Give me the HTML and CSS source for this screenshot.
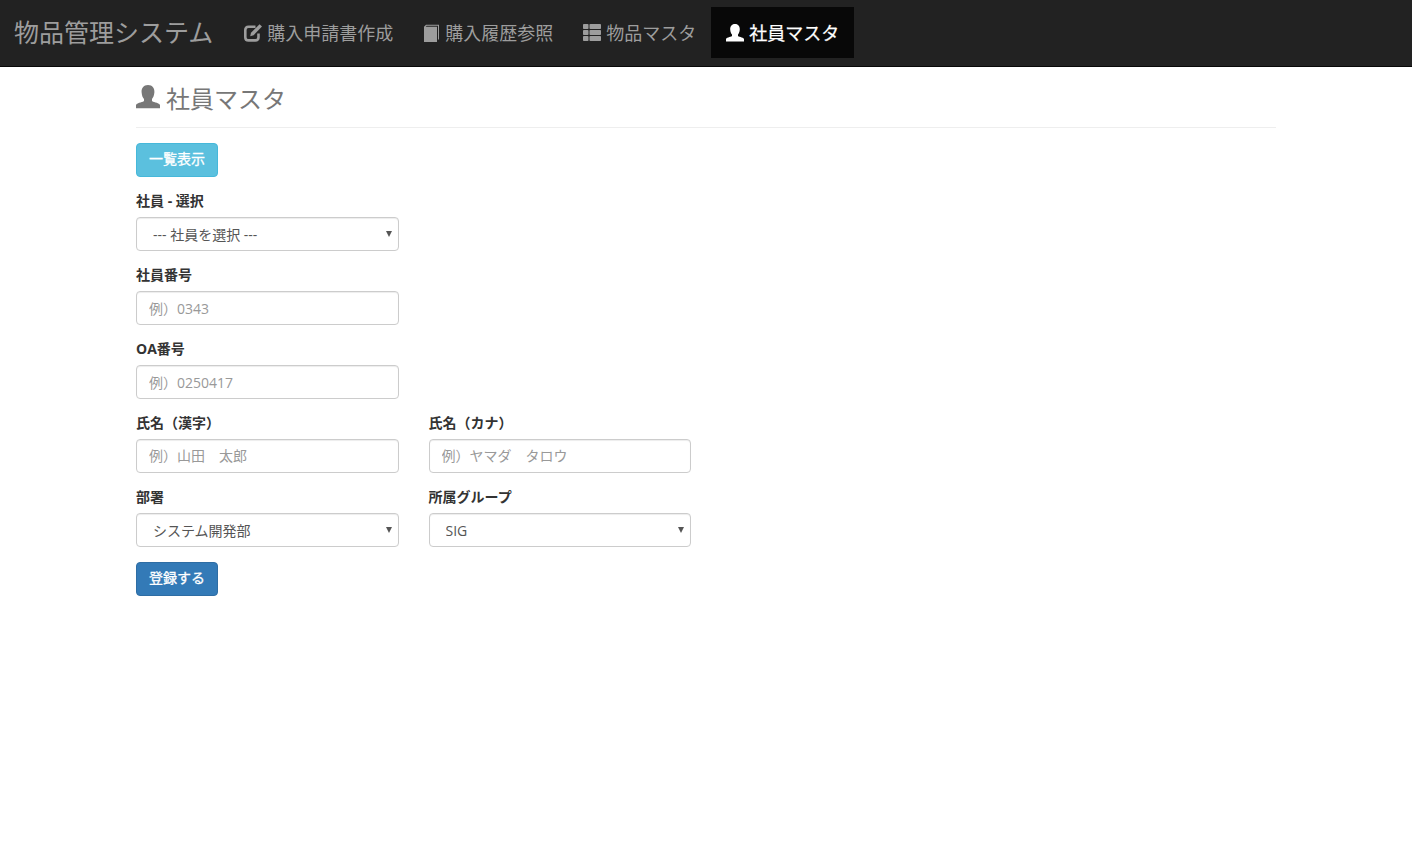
FILE: index.html
```html
<!DOCTYPE html>
<html lang="ja">
<head>
<meta charset="utf-8">
<title>物品管理システム</title>
<link rel="stylesheet" href="styles.css">
</head>
<body>
<nav class="navbar">
  <a class="brand" href="#">物品管理システム</a>
  <ul class="nav">
    <li><a href="#"><svg class="icon" viewBox="0 0 18 18"><path fill="none" stroke="currentColor" stroke-width="2.6" d="M11.500 2.800H4.500Q1.300 2.800 1.300 6v7.200q0 3.200 3.200 3.200h6.800q3.200 0 3.200-3.200V9.500"/><path fill="currentColor" d="M15.600.2 18 2.600 9.600 11.200l-3.400 1 .8-3.400z"/></svg>購入申請書作成</a></li>
    <li><a href="#"><svg class="icon" viewBox="0 0 18 18"><path fill="currentColor" d="M2 2.800 4 .8h13v14.700h-1V1.800H4.600L3.600 2.800H15V18H2z"/></svg>購入履歴参照</a></li>
    <li><a href="#"><svg class="icon" viewBox="0 0 18 18"><rect fill="currentColor" x="0" y="0" width="5.500" height="5" rx=".8"/><rect fill="currentColor" x="6.500" y="0" width="11.500" height="5" rx=".8"/><rect fill="currentColor" x="0" y="6" width="5.500" height="5" rx=".8"/><rect fill="currentColor" x="6.500" y="6" width="11.500" height="5" rx=".8"/><rect fill="currentColor" x="0" y="12" width="5.500" height="5" rx=".8"/><rect fill="currentColor" x="6.500" y="12" width="11.500" height="5" rx=".8"/></svg>物品マスタ</a></li>
    <li class="active"><a href="#"><svg class="icon" viewBox="0 0 18 18"><path fill="currentColor" d="M9 0c3.400 0 5 2.500 4.800 5.500-.2 2.600-1 4-1.800 5v1.500c0 .8 5 1 6 3v2.500H0V15c1-2 6-2.200 6-3v-1.500c-1-1-1.600-2.400-1.800-5C4 2.500 5.600 0 9 0z"/></svg>社員マスタ</a></li>
  </ul>
</nav>
<main class="container">
  <h1 class="page-header"><svg class="icon" viewBox="0 0 18 18"><path fill="currentColor" d="M9 0c3.400 0 5 2.500 4.800 5.500-.2 2.600-1 4-1.800 5v1.500c0 .8 5 1 6 3v2.500H0V15c1-2 6-2.200 6-3v-1.500c-1-1-1.600-2.400-1.800-5C4 2.500 5.600 0 9 0z"/></svg>社員マスタ</h1>
  <a class="btn btn-info" href="#">一覧表示</a>
  <form class="form">
    <div class="row">
      <div class="field">
        <label>社員 - 選択</label>
        <div class="select-wrap"><select class="control"><option>--- 社員を選択 ---</option></select></div>
      </div>
    </div>
    <div class="row">
      <div class="field">
        <label>社員番号</label>
        <input class="control" type="text" placeholder="例）0343">
      </div>
    </div>
    <div class="row">
      <div class="field">
        <label>OA番号</label>
        <input class="control" type="text" placeholder="例）0250417">
      </div>
    </div>
    <div class="row">
      <div class="field">
        <label>氏名（漢字）</label>
        <input class="control control-cjk" type="text" placeholder="例）山田　太郎">
      </div>
      <div class="field">
        <label>氏名（カナ）</label>
        <input class="control control-cjk" type="text" placeholder="例）ヤマダ　タロウ">
      </div>
    </div>
    <div class="row">
      <div class="field">
        <label>部署</label>
        <div class="select-wrap"><select class="control"><option>システム開発部</option></select></div>
      </div>
      <div class="field">
        <label>所属グループ</label>
        <div class="select-wrap"><select class="control"><option>SIG</option></select></div>
      </div>
    </div>
    <button class="btn btn-primary" type="button">登録する</button>
  </form>
</main>
</body>
</html>
```
FILE: styles.css
```css
* { box-sizing: border-box; }
html, body { margin: 0; padding: 0; }
body {
  font-family: "Open Sans", "Noto Sans CJK JP", sans-serif;
  font-size: 14px;
  line-height: 20px;
  color: #333;
  background: #fff;
}
a { text-decoration: none; }
.navbar {
  display: flex;
  height: 67px;
  padding-left: 14px;
  background: #222;
  border-bottom: 1px solid #080808;
}
.brand {
  font-size: 25px;
  line-height: 64px;
  color: #9d9d9d;
  margin-right: 15px;
}
.nav {
  display: flex;
  list-style: none;
  margin: 7px 0 0;
  padding: 0;
  height: 51px;
}
.nav a {
  display: flex;
  align-items: center;
  height: 51px;
  padding: 0 15px;
  font-size: 18px;
  color: #9d9d9d;
}
.nav li:first-child a { padding: 0 14px 0 16px; }
.nav .active a { background: #080808; color: #fff; -webkit-text-stroke: .25px #fff; }
.icon { width: 18px; height: 18px; margin-right: 5px; flex: none; overflow: visible; }
.container { width: 1140px; margin: 0 auto; }
.page-header {
  display: flex;
  align-items: center;
  height: 61px;
  margin: 0 0 15px;
  padding-top: 4px;
  font-size: 24px;
  font-weight: 400;
  color: #777;
  border-bottom: 1px solid #eee;
}
.page-header .icon { width: 24px; height: 24px; margin: -4px 6px 0 0; }
.btn {
  display: block;
  width: 82px;
  height: 34px;
  padding: 6px 12px;
  font: inherit;
  line-height: 18px;
  color: #fff;
  text-align: center;
  white-space: nowrap;
  border: 1px solid transparent;
  border-radius: 4px;
  -webkit-text-stroke: .3px #fff;
}
.btn-info { background: #5bc0de; border-color: #46b8da; }
.btn-primary { padding-bottom: 8px; background: #337ab7; border-color: #2e6da4; }
.form { margin-top: 15px; }
.row { display: flex; gap: 30px; }
.field { width: 262.5px; margin-bottom: 15px; }
label { display: block; margin-bottom: 7px; font-weight: 700; line-height: 18px; }
.control {
  display: block;
  width: 100%;
  height: 34px;
  padding: 6px 12px;
  font: inherit;
  color: #555;
  background: #fff;
  border: 1px solid #ccc;
  border-radius: 4px;
  box-shadow: inset 0 1px 1px rgba(0, 0, 0, .075);
}
.control-cjk { padding-bottom: 8px; }
.control::placeholder { color: #999; opacity: 1; }
select.control { appearance: none; padding: 7px 12px 6px 16px; }
.select-wrap { position: relative; }
.select-wrap::after {
  content: "";
  position: absolute;
  top: 14px;
  right: 7px;
  border-style: solid;
  border-width: 6px 3px 0;
  border-color: #555 transparent transparent;
  pointer-events: none;
}
```
